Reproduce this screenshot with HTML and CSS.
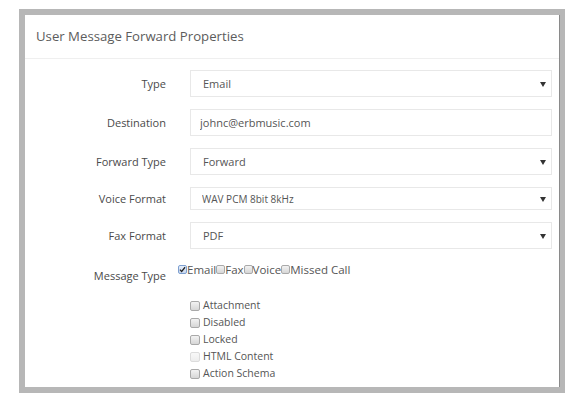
FILE: index.html
```html
<!DOCTYPE html>
<html>
<head>
<meta charset="utf-8">
<link rel="stylesheet" href="styles.css">
</head>
<body>
<div class="frame">
  <div class="panel">
    <div class="panel-head">User Message Forward Properties</div>
    <div class="panel-body">
      <div class="row">
        <label class="lbl">Type</label>
        <div class="sel">
          <select class="ctl"><option>Email</option></select>
          <span class="arrow"></span>
        </div>
      </div>
      <div class="row">
        <label class="lbl">Destination</label>
        <input class="ctl txt" type="text" value="johnc@erbmusic.com">
      </div>
      <div class="row">
        <label class="lbl">Forward Type</label>
        <div class="sel">
          <select class="ctl"><option>Forward</option></select>
          <span class="arrow"></span>
        </div>
      </div>
      <div class="row row-small">
        <label class="lbl">Voice Format</label>
        <div class="sel">
          <select class="ctl small"><option>WAV PCM 8bit 8kHz</option></select>
          <span class="arrow"></span>
        </div>
      </div>
      <div class="row">
        <label class="lbl">Fax Format</label>
        <div class="sel">
          <select class="ctl"><option>PDF</option></select>
          <span class="arrow"></span>
        </div>
      </div>
      <div class="row">
        <label class="lbl lbl-top">Message Type</label>
        <div class="checks">
          <div class="inline">
            <label class="ic"><span class="box box-sm checked"><svg viewBox="0 0 9 9" width="7" height="7"><path d="M1.2 4.6 L3.4 7 L7.8 1.6" fill="none" stroke="#222" stroke-width="1.6"/></svg></span>Email</label>
            <label class="ic"><span class="box box-sm"></span>Fax</label>
            <label class="ic"><span class="box box-sm"></span>Voice</label>
            <label class="ic"><span class="box box-sm"></span>Missed Call</label>
          </div>
          <div class="list">
            <label class="lc"><span class="box"></span>Attachment</label>
            <label class="lc"><span class="box"></span>Disabled</label>
            <label class="lc"><span class="box"></span>Locked</label>
            <label class="lc"><span class="box disabled"></span>HTML Content</label>
            <label class="lc"><span class="box"></span>Action Schema</label>
          </div>
        </div>
      </div>
    </div>
  </div>
</div>
</body>
</html>
```
FILE: styles.css
```css
* { box-sizing: border-box; }
body {
  margin: 0;
  background: #fff;
  font-family: "Open Sans", "DejaVu Sans", sans-serif;
  color: #555;
}
.frame {
  margin: 9px 0 0 19px;
  width: 546px;
  height: 384px;
  border: 6px solid #b7b7b7;
  border-right-width: 5px;
  border-bottom-width: 6px;
}
.panel {
  height: 100%;
  background: #fff;
  border-right: 1px solid #8a8a8a;
}
.panel-head {
  padding: 11px 11px 12px;
  font-size: 13.2px;
  line-height: 20px;
  color: #5c5c5c;
  border-bottom: 1px solid #efefef;
}
.panel-body {
  padding: 11px 7px 0 0;
}
.row {
  display: grid;
  grid-template-columns: 141px 1fr;
  column-gap: 24px;
  margin-bottom: 12px;
}
.lbl {
  text-align: right;
  font-size: 11px;
  line-height: 27px;
  color: #4a4a4a;
}
.row-small .lbl {
  line-height: 23px;
}
.lbl-top {
  line-height: 17px;
  padding-top: 6px;
}
.sel {
  position: relative;
}
.ctl {
  display: block;
  width: 100%;
  height: 27px;
  margin: 0;
  border: 1px solid #e8e8e8;
  border-radius: 0;
  background: #fff;
  padding: 0 12px;
  font-family: "Open Sans", "DejaVu Sans", sans-serif;
  font-size: 11px;
  color: #555;
  appearance: none;
  -webkit-appearance: none;
  outline: none;
}
.txt {
  padding-left: 9px;
}
.small {
  height: 23px;
  font-size: 10px;
  padding-left: 11px;
}
.arrow {
  position: absolute;
  right: 6px;
  top: 50%;
  margin-top: -2px;
  width: 0;
  height: 0;
  border-left: 3px solid transparent;
  border-right: 3px solid transparent;
  border-top: 5px solid #333;
}
.checks {
  margin-left: -12px;
  font-size: 11.5px;
  color: #555;
}
.inline {
  display: flex;
  align-items: center;
  line-height: 17px;
}
.ic {
  display: flex;
  align-items: center;
}
.box {
  display: inline-flex;
  align-items: center;
  justify-content: center;
  flex: none;
  width: 10px;
  height: 10px;
  border: 1px solid #a9a9a9;
  border-radius: 2px;
  background: linear-gradient(#f2f2f2, #d6d6d6);
}
.box-sm {
  width: 9px;
  height: 9px;
}
.box.checked {
  border-color: #7d9fd0;
  background: linear-gradient(#e6eefa, #c7d7ef);
}
.box.disabled {
  border-color: #dcdcdc;
  background: linear-gradient(#f8f8f8, #ededed);
}
.list {
  margin-left: 12px;
  margin-top: 19px;
  font-size: 10.5px;
}
.lc {
  display: flex;
  align-items: center;
  line-height: 17px;
}
.lc .box {
  margin-right: 3px;
}
```
